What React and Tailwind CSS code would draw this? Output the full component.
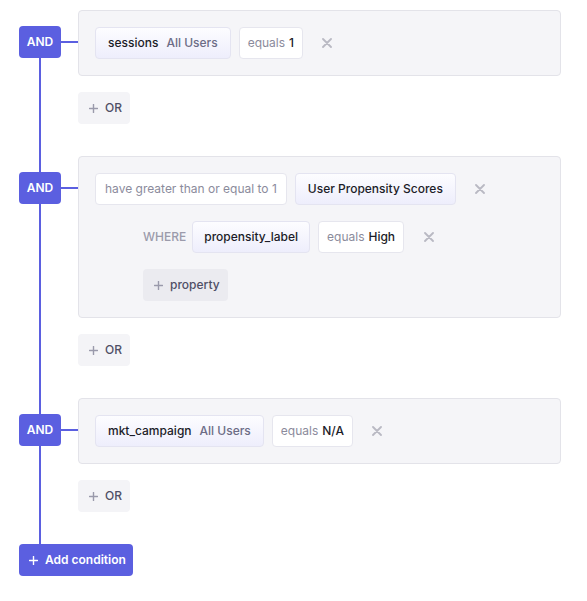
import React from "react";

const font = { fontFamily: "Inter, 'Noto Sans', sans-serif" };

function XIcon({ className = "" }) {
  return (
    <svg width="10" height="10" viewBox="0 0 10 10" className={className}>
      <path d="M1 1L9 9M9 1L1 9" stroke="#b9b9c3" strokeWidth="1.8" strokeLinecap="round" />
    </svg>
  );
}

function Plus({ color = "#9a9aab" }) {
  return (
    <svg width="9" height="9" viewBox="0 0 9 9">
      <path d="M4.5 0.5V8.5M0.5 4.5H8.5" stroke={color} strokeWidth="1.4" strokeLinecap="round" />
    </svg>
  );
}

function Prop({ name, scope, tight }) {
  return (
    <div
      className={`flex h-[32px] items-center gap-[8px] rounded-[4px] border border-[#e4e4f1] bg-gradient-to-b from-[#fdfdff] to-[#eeeefc] ${
        tight ? "px-[11px]" : "px-[12px]"
      } text-[12px] font-medium text-[#1c1c28]`}
    >
      <span>{name}</span>
      {scope && <span className="text-[#6c6c86]">{scope}</span>}
    </div>
  );
}

function Val({ label, value, wide }) {
  return (
    <div
      className={`flex h-[32px] items-center gap-[4px] rounded-[4px] border border-[#e6e6ee] bg-white ${
        wide ? "px-[9px]" : "px-[8px]"
      } text-[12px]`}
    >
      <span className="text-[#8b8b9c]">{label}</span>
      {value && <span className="font-medium text-[#1c1c28]">{value}</span>}
    </div>
  );
}

function OrButton() {
  return (
    <button className="mt-[16px] flex h-[32px] w-[52px] items-center gap-[7px] rounded-[4px] bg-[#f4f4f7] pl-[11px] text-[12px] font-medium text-[#4f4f66]">
      <Plus />
      <span>OR</span>
    </button>
  );
}

function Group({ first, children }) {
  return (
    <div className="flex">
      <div className="flex w-[59px] shrink-0 flex-col">
        <div className={`ml-[20px] h-[16px] w-[2px] ${first ? "" : "bg-[#5b5fe0]"}`} />
        <div className="flex items-center">
          <div className="flex h-[32px] w-[42px] items-center justify-center rounded-[4px] bg-[#5b5fe0] text-[12px] font-semibold text-white">
            AND
          </div>
          <div className="h-[2px] w-[17px] bg-[#5b5fe0]" />
        </div>
        <div className="ml-[20px] w-[2px] flex-1 bg-[#5b5fe0]" />
      </div>
      <div className="flex min-w-0 flex-1 flex-col items-start pb-[32px]">
        <div className="w-full rounded-[4px] border border-[#e3e3e9] bg-[#f5f5f8] p-[16px]">
          {children}
        </div>
        <OrButton />
      </div>
    </div>
  );
}

export default function App() {
  return (
    <div className="min-h-[601px] w-[587px] bg-white pl-[19px] pr-[26px] pt-[10px]" style={font}>
      <Group first>
        <div className="flex items-center gap-[8px]">
          <Prop name="sessions" scope="All Users" />
          <Val label="equals" value="1" />
          <XIcon className="ml-[11px]" />
        </div>
      </Group>
      <Group>
        <div className="flex flex-col items-start gap-[16px]">
          <div className="flex items-center gap-[8px]">
            <Val label="have greater than or equal to 1" wide />
            <Prop name="User Propensity Scores" />
            <XIcon className="ml-[11px]" />
          </div>
          <div className="ml-[48px] flex items-center gap-[8px]">
            <span className="mr-[-2px] text-[12px] font-medium text-[#9b9bab]">WHERE</span>
            <Prop name="propensity_label" tight />
            <Val label="equals" value="High" />
            <XIcon className="ml-[12px]" />
          </div>
          <button className="ml-[48px] flex h-[32px] items-center gap-[7px] rounded-[4px] bg-[#ebebf0] pl-[11px] pr-[8px] text-[12px] font-medium text-[#4f4f66]">
            <Plus />
            <span>property</span>
          </button>
        </div>
      </Group>
      <Group>
        <div className="flex items-center gap-[8px]">
          <Prop name="mkt_campaign" scope="All Users" />
          <Val label="equals" value="N/A" />
          <XIcon className="ml-[11px]" />
        </div>
      </Group>
      <button className="flex h-[32px] items-center gap-[7px] whitespace-nowrap rounded-[4px] bg-[#5b5fe0] pl-[10px] pr-[7px] text-[12px] font-semibold text-white">
        <Plus color="#ffffff" />
        <span>Add condition</span>
      </button>
    </div>
  );
}
